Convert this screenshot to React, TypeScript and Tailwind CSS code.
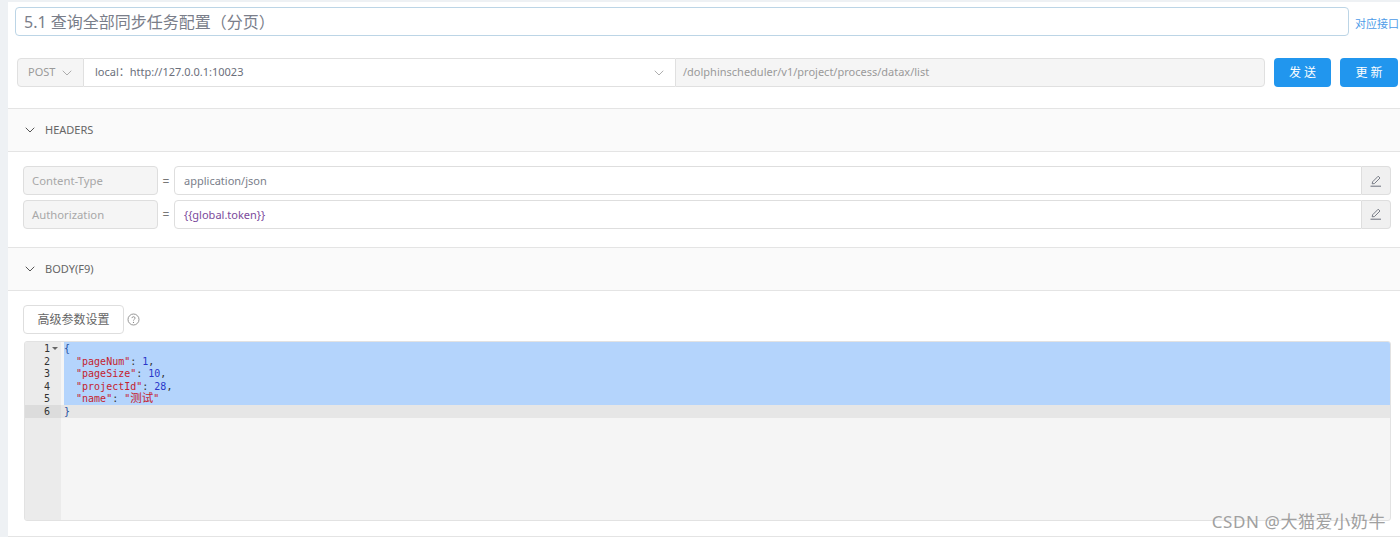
import React from "react";
import { ChevronDown } from "lucide-react";

const sans = "font-['Noto_Sans','Noto_Sans_CJK_SC',sans-serif]";

function EditIcon() {
  return (
    <svg width="14" height="14" viewBox="0 0 14 14" fill="none" stroke="#6b6f7b" strokeWidth="0.9">
      <path d="M3.2 9.8 L3.6 7.8 L9.2 2.2 L11 4 L5.4 9.6 Z" />
      <path d="M1.5 12.2 H12" strokeWidth="1" />
    </svg>
  );
}

function HeaderRow({ name, value, purple }: { name: string; value: string; purple?: boolean }) {
  return (
    <div className="flex h-[29px] items-stretch">
      <div className="flex w-[135px] items-center rounded-[4px] border border-[#dedede] bg-[#f5f5f5] pl-[8px] pt-[2px] text-[11.3px] text-[#a8a8a8]">
        {name}
      </div>
      <div className="flex w-[16px] items-center justify-center pt-[2px] text-[12px] text-[#777]">=</div>
      <div className={`flex w-[1188px] items-center rounded-l-[4px] border border-[#dedede] bg-white pl-[9px] pt-[2px] text-[11px] ${purple ? "text-[#7b4a9c]" : "text-[#7a7e8a]"}`}>
        {value}
      </div>
      <div className="flex w-[29px] items-center justify-center rounded-r-[4px] border border-l-0 border-[#dedede] bg-[#f0f0f0]">
        <EditIcon />
      </div>
    </div>
  );
}

function SectionHeader({ title }: { title: string }) {
  return (
    <div className="flex h-[44px] items-center border-y border-[#e4e4e4] bg-[#fafafa] pl-[14px] text-[11px] text-[#666]">
      <ChevronDown size={16} strokeWidth={1.5} className="text-[#555]" />
      <span className="ml-[7px]">{title}</span>
    </div>
  );
}

const K = ({ children }: { children: React.ReactNode }) => <span className="text-[#c4232f]">{children}</span>;
const N = ({ children }: { children: React.ReactNode }) => <span className="text-[#2a36c9]">{children}</span>;

const lines: React.ReactNode[] = [
  <span className="text-[#1f4fa0]">{"{"}</span>,
  <><K>{'  "pageNum"'}</K>: <N>1</N>,</>,
  <><K>{'  "pageSize"'}</K>: <N>10</N>,</>,
  <><K>{'  "projectId"'}</K>: <N>28</N>,</>,
  <><K>{'  "name"'}</K>: <K>"<span className="font-['Noto_Sans_CJK_SC',sans-serif] text-[11.5px] leading-[0]">测试</span>"</K></>,
  <span className="text-[#1f4fa0]">{"}"}</span>,
];

export default function App() {
  return (
    <div className={`relative h-[537px] w-[1400px] overflow-hidden bg-[#eef1f4] pl-[8px] pt-[2px] ${sans}`}>
      <div className="h-[535px] bg-white">
        {/* title */}
        <div className="flex items-center pl-[7px] pt-[5px]">
          <div className="flex h-[29px] w-[1334px] items-center rounded-[4px] border border-[#bcd5e6] bg-white pl-[8px] text-[16px] text-[#7a7e8a]">
            5.1 查询全部同步任务配置（分页）
          </div>
          <a className="ml-[6px] mt-[6px] whitespace-nowrap text-[11px] text-[#4c9be8]">对应接口</a>
        </div>

        {/* request line */}
        <div className="mt-[22px] flex h-[29px] pl-[9px]">
          <div className="flex w-[67px] items-center rounded-l-[4px] border border-[#e0e0e0] bg-[#f5f5f5] pl-[10px] text-[11px] text-[#9a9a9a]">
            POST
            <ChevronDown size={16} strokeWidth={1.2} className="ml-[4px] shrink-0 text-[#999]" />
          </div>
          <div className="flex w-[591px] items-center justify-between border-y border-[#e0e0e0] bg-white pl-[11px] pr-[8px] text-[11px] text-[#6b6f7b]">
            <span>local：http://127.0.0.1:10023</span>
            <ChevronDown size={16} strokeWidth={1.2} className="text-[#999]" />
          </div>
          <div className="flex w-[590px] items-center rounded-r-[4px] border border-[#e0e0e0] bg-[#f5f5f5] pl-[7px] text-[11px] text-[#9a9a9a]">
            /dolphinscheduler/v1/project/process/datax/list
          </div>
          <button className="ml-[9px] h-[29px] w-[57px] rounded-[4px] bg-[#2196ee] pl-[3px] text-[12px] tracking-[3px] text-white">发送</button>
          <button className="ml-[9px] h-[29px] w-[58px] rounded-[4px] bg-[#2196ee] pl-[3px] text-[12px] tracking-[3px] text-white">更新</button>
        </div>

        <div className="mt-[21px]">
          <SectionHeader title="HEADERS" />
          <div className="flex h-[95px] flex-col gap-[4.5px] pl-[15px] pt-[14px]">
            <HeaderRow name="Content-Type" value="application/json" />
            <HeaderRow name="Authorization" value="{{global.token}}" purple />
          </div>
          <SectionHeader title="BODY(F9)" />
          <div className="flex items-center pl-[15px] pt-[14px]">
            <button className="h-[29px] w-[101px] rounded-[4px] border border-[#dedede] bg-white text-[12px] text-[#666]">高级参数设置</button>
            <svg className="ml-[3px]" width="13" height="13" viewBox="0 0 13 13" fill="none">
              <circle cx="6.5" cy="6.5" r="5.5" stroke="#8a8a8a" strokeWidth="0.9" />
              <path d="M4.9 5.1 C4.9 3.2 8.1 3.2 8.1 5.1 C8.1 6.3 6.5 6.2 6.5 7.6" stroke="#8a8a8a" strokeWidth="0.9" />
              <circle cx="6.5" cy="9.4" r="0.6" fill="#8a8a8a" />
            </svg>
          </div>

          {/* editor */}
          <div className="ml-[16px] mt-[7px] flex h-[180px] w-[1367px] overflow-hidden rounded-[3px] border border-[#e2e2e2] bg-[#f5f5f5] font-['DejaVu_Sans_Mono','Noto_Sans_CJK_SC',monospace] text-[10px]">
            <div className="w-[36px] shrink-0 bg-[#ebebeb] text-[#333]">
              {lines.map((_, i) => (
                <div key={i} className={`relative h-[12.6px] pr-[11px] text-right leading-[14px] ${i === 5 ? "bg-[#dcdcdc]" : ""}`}>
                  {i + 1}
                  {i === 0 && <span className="absolute right-[3px] top-[5px] h-0 w-0 border-x-[3px] border-t-[3px] border-x-transparent border-t-[#666]" />}
                </div>
              ))}
            </div>
            <div className="flex-1 text-[#333]">
              {lines.map((l, i) => (
                <div key={i} className={`h-[12.6px] whitespace-pre leading-[14px] ${i === 5 ? "bg-[#e6e6e6]" : ""}`}>
                  <div className={`ml-[3px] h-full ${i < 5 ? "bg-[#b4d4fc]" : ""}`}>{l}</div>
                </div>
              ))}
            </div>
          </div>
          <div className="mt-[15px] border-t border-[#e4e4e4]" />
        </div>
      </div>
      <div className="absolute right-[14px] top-[509px] text-[17px] tracking-[0.6px] text-[#a0a0a0]">CSDN @大猫爱小奶牛</div>
    </div>
  );
}
